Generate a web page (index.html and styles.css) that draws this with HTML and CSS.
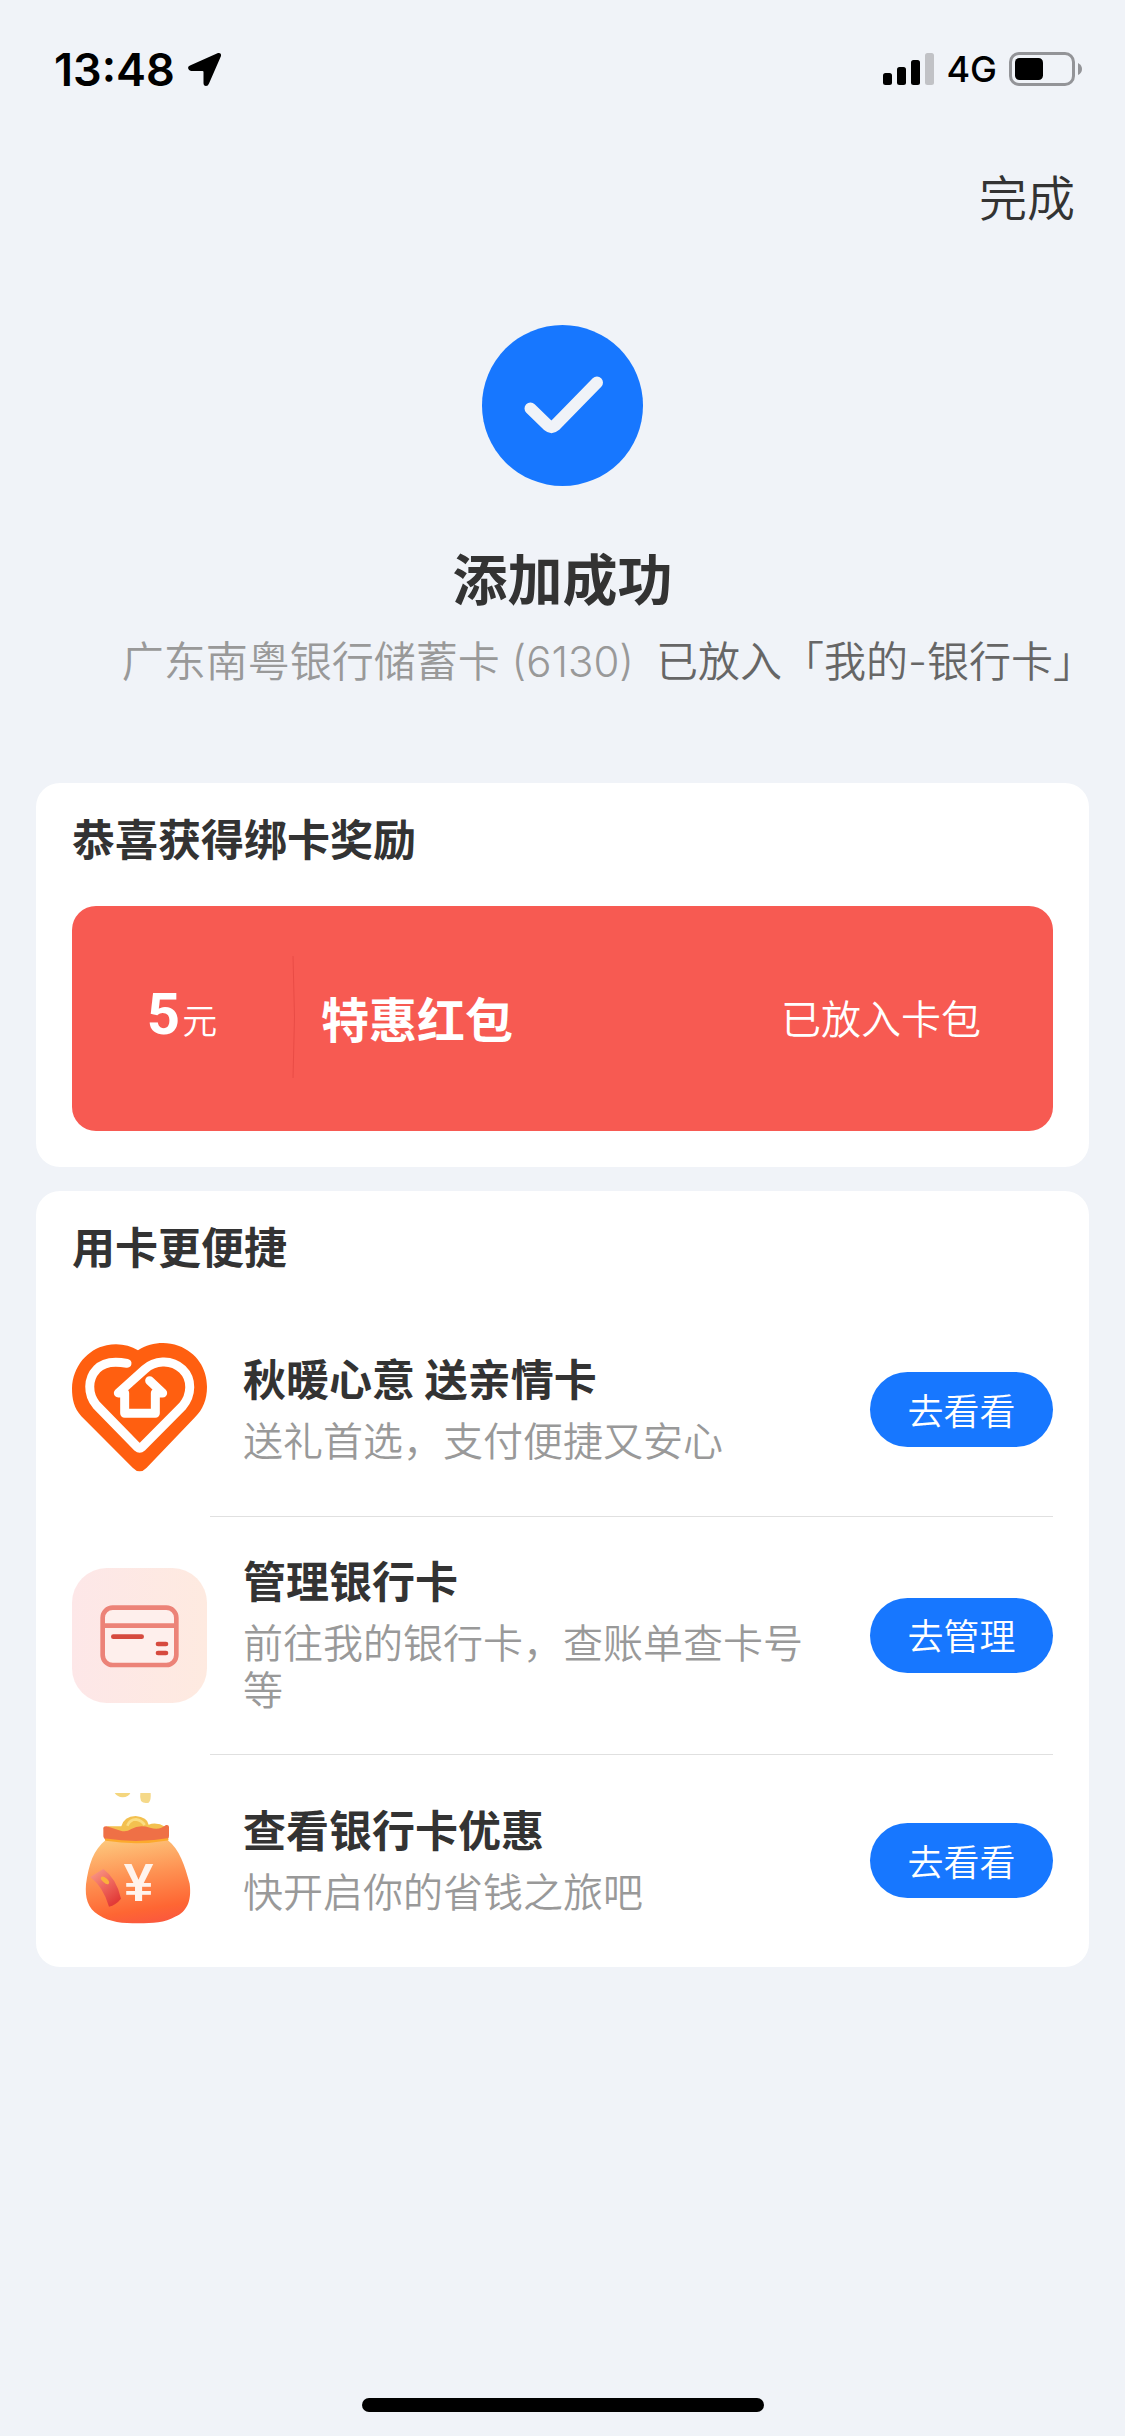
FILE: index.html
```html
<!DOCTYPE html>
<html lang="zh-CN">
<head>
<meta charset="utf-8">
<meta name="viewport" content="width=device-width, initial-scale=1">
<title>添加成功</title>
<link rel="stylesheet" href="styles.css">
</head>
<body>
<div class="page">
  <div class="status">
    <div class="status-side">
      <span class="clock">13:48</span>
      <svg class="locate" viewBox="0 0 36 36" aria-hidden="true"><path d="M3 14.500 31 2Q34.500 1.500 34 5L22 32.500Q21 35 19 35Q16.500 35 16.500 32V21Q16.500 20 15.500 20H4Q1.500 19.500 1 17Q1 15.300 3 14.500Z"/></svg>
    </div>
    <div class="status-side status-right">
      <svg class="signal" viewBox="0 0 51 32" aria-hidden="true"><rect y="20" width="9" height="12" rx="2.500"/><rect x="14" y="14" width="9" height="18" rx="2.500"/><rect x="28" y="7" width="9" height="25" rx="2.500"/><rect x="42" width="9" height="32" rx="2.500" fill="#c1c2c6"/></svg>
      <span class="network">4G</span>
      <svg class="battery" viewBox="0 0 74 34" aria-hidden="true"><rect x="1.500" y="1.500" width="63" height="31" rx="8.500" fill="none" stroke="#939498" stroke-width="3"/><rect x="6" y="6" width="28" height="22" rx="4.500"/><path d="M69 11q4 2 4 6t-4 6z" fill="#939498"/></svg>
    </div>
  </div>

  <header class="topbar"><button class="done" type="button">完成</button></header>

  <main>
    <section class="result">
      <svg class="result-icon" viewBox="0 0 161 161" aria-hidden="true"><circle cx="80.500" cy="80.500" r="80.500" fill="#1777ff"/><path d="M48.500 83.500 66 100.500Q69.500 103.500 73 100.500L115 57.500" fill="none" stroke="#f0f3f8" stroke-width="12" stroke-linecap="round" stroke-linejoin="round"/></svg>
      <h1 class="result-title">添加成功</h1>
      <p class="result-note"><span class="card-name">广东南粤银行储蓄卡 (6130)</span><span>已放入「我的-银行卡」</span></p>
    </section>

    <section class="card reward-card">
      <h2 class="card-title">恭喜获得绑卡奖励</h2>
      <div class="reward">
        <p class="amount"><b class="amount-value">5</b><span>元</span></p>
        <svg class="divider" viewBox="0 0 4 122" preserveAspectRatio="none" aria-hidden="true"><path d="M1 0Q4 61 1 122" fill="none" stroke="#e94c46" stroke-width="1"/></svg>
        <h3 class="reward-name">特惠红包</h3>
        <span class="reward-state">已放入卡包</span>
      </div>
    </section>

    <section class="card">
      <h2 class="card-title">用卡更便捷</h2>
      <ul class="list">
        <li class="item">
          <svg class="item-icon" viewBox="66 66 405 405" aria-hidden="true">
            <path d="M264 91C300 68 345 63 385 77C440 97 471 145 471 200C471 240 458 268 435 292L290 443Q269 465 248 443L94 289C72 264 66 238 66 205C68 140 112 88 170 76C204 69 238 75 264 91Z" fill="#ff5f10"/>
            <g fill="none" stroke="#fff" stroke-width="27" stroke-linecap="round" stroke-linejoin="round"><path d="M231 130C190 122 160 126 140 148C113 176 112 222 139 255L262 381Q269 387 276 381L398 258C425 225 428 178 397 148C362 115 312 123 284 148L205 219H224V280H316V219H338L299 182"/></g>
          </svg>
          <div class="item-body">
            <h3 class="item-title">秋暖心意 送亲情卡</h3>
            <p class="item-text">送礼首选，支付便捷又安心</p>
          </div>
          <button class="go" type="button">去看看</button>
        </li>
        <li class="item">
          <svg class="item-icon" viewBox="66 80 405 405" aria-hidden="true">
            <defs><linearGradient id="tile" x1="0" y1="0" x2="1" y2="0"><stop offset="0" stop-color="#fde7e8"/><stop offset="1" stop-color="#feeae0"/></linearGradient></defs>
            <rect x="66" y="80" width="405" height="405" rx="104" fill="url(#tile)"/>
            <g fill="none" stroke="#ec8378" stroke-width="14"><rect x="158" y="199" width="221" height="172" rx="30" fill="#feefec"/><path d="M158 253H379"/></g>
            <path d="M190 286H275M324 308H348M324 335H348" fill="none" stroke="#d64a3e" stroke-width="14" stroke-linecap="round"/>
          </svg>
          <div class="item-body">
            <h3 class="item-title">管理银行卡</h3>
            <p class="item-text">前往我的银行卡，查账单查卡号等</p>
          </div>
          <button class="go" type="button">去管理</button>
        </li>
        <li class="item">
          <svg class="item-icon" viewBox="66 68 405 405" aria-hidden="true">
            <defs>
              <linearGradient id="bag" x1="0.300" y1="0" x2="0.500" y2="1"><stop offset="0" stop-color="#fdc67c"/><stop offset="0.450" stop-color="#fe9152"/><stop offset="0.850" stop-color="#fe6633"/><stop offset="1" stop-color="#fb5a3c"/></linearGradient>
              <linearGradient id="packet" x1="0" y1="0" x2="0.600" y2="1"><stop offset="0" stop-color="#fba08c"/><stop offset="0.500" stop-color="#ef6a60"/><stop offset="1" stop-color="#e23b38"/></linearGradient>
            </defs>
            <path d="M194 68H241Q236 80 218 81Q202 80 194 68Z" fill="#f4d67e"/>
            <path d="M271 68H302Q304 90 296 97Q281 101 273 92Q269 80 271 68Z" fill="#f5d989"/>
            <path d="M172 168H214Q222 138 257 137Q292 140 296 163Q320 154 347 170L340 190H180Z" fill="#f3c04f"/>
            <path d="M232 166Q240 147 258 147Q276 150 284 164" fill="none" stroke="#fbdd83" stroke-width="8"/>
            <path d="M168 208H352C390 238 404 285 419 340C426 395 408 424 378 438C342 458 310 459 265 459C218 459 180 456 146 434C112 414 105 382 108 342C116 282 130 238 168 208Z" fill="url(#bag)"/>
            <path d="M160 178Q158 167 170 168L212 181Q228 187 244 176Q268 162 300 172Q328 181 348 164Q358 162 357 174V196Q357 208 346 209Q260 219 172 209Q161 207 160 198Z" fill="#ef7046"/>
            <path d="M168 208Q262 223 352 207" fill="none" stroke="#fcaa2d" stroke-width="7" stroke-linecap="round"/>
            <path d="M121 320Q140 308 160 296Q200 325 213 385Q198 404 177 409Q160 350 121 320Z" fill="url(#packet)"/>
            <ellipse cx="165" cy="330" rx="15" ry="7" transform="rotate(42 165 330)" fill="#fbb03c"/>
            <text class="yen" x="266" y="391" text-anchor="middle">¥</text>
          </svg>
          <div class="item-body">
            <h3 class="item-title">查看银行卡优惠</h3>
            <p class="item-text">快开启你的省钱之旅吧</p>
          </div>
          <button class="go" type="button">去看看</button>
        </li>
      </ul>
    </section>
  </main>

  <div class="home-indicator"></div>
</div>
</body>
</html>
```
FILE: styles.css
```css
* { box-sizing: border-box; margin: 0; padding: 0; }

body {
  background: #f0f3f8;
  color: #333;
  font-family: "Noto Sans CJK SC", sans-serif;
  font-size: 40px;
}

button { border: 0; background: none; font: inherit; color: inherit; cursor: pointer; }
svg { display: block; flex: none; }

.page { display: flex; flex-direction: column; min-height: 100vh; }

.status {
  display: flex;
  justify-content: space-between;
  align-items: center;
  height: 138px;
  padding: 0 42px 0 54px;
  color: #000;
  font-family: Inter, sans-serif;
}
.status-side { display: flex; align-items: center; gap: 12px; }
.clock { font-size: 45px; font-weight: 600; }
.locate { width: 36px; height: 36px; }
.signal { width: 51px; height: 32px; }
.network { font-size: 36px; font-weight: 500; }
.battery { width: 74px; height: 34px; }

.topbar { display: flex; justify-content: flex-end; padding: 21px 50px 28px; }
.done { font-size: 48px; font-weight: 350; line-height: 72px; }

.result { display: flex; flex-direction: column; align-items: center; padding-top: 66px; }
.result-icon { width: 161px; height: 161px; }
.result-title { margin-top: 52px; font-size: 55px; font-weight: 700; line-height: 76px; }
.result-note {
  display: flex;
  align-self: stretch;
  justify-content: flex-end;
  gap: 22px;
  margin-top: 18px;
  padding-right: 30px;
  color: #666;
  font-family: Inter, "Noto Sans CJK SC", sans-serif;
  font-size: 42px;
  font-weight: 350;
  line-height: 60px;
  white-space: nowrap;
}
.card-name { color: #999; }

.card { margin: 0 36px 24px; padding: 0 36px; border-radius: 24px; background: #fff; }
.reward-card { margin-top: 91px; padding-bottom: 36px; }
.card-title { padding: 26px 0 30px; font-size: 43px; font-weight: 700; line-height: 56px; }

.reward {
  display: flex;
  align-items: center;
  height: 225px;
  margin-top: 11px;
  padding: 0 72px 4px 0;
  border-radius: 24px;
  background: #f75a52;
  color: #fff;
}
.amount {
  display: flex;
  align-items: baseline;
  justify-content: center;
  gap: 2px;
  width: 220px;
  font-size: 35px;
  font-weight: 350;
  line-height: 72px;
}
.amount-value { font-family: Roboto, sans-serif; font-size: 58px; font-weight: 700; }
.divider { width: 4px; height: 122px; }
.reward-name { flex: 1; padding-left: 25px; font-size: 48px; font-weight: 700; line-height: 72px; }
.reward-state { font-weight: 350; line-height: 60px; }

.list { list-style: none; }
.item { display: flex; align-items: center; min-height: 213px; padding: 36px 0; position: relative; }
.item + .item::before {
  content: "";
  position: absolute;
  top: 0;
  right: 0;
  left: 138px;
  height: 1px;
  background: #e0e0e0;
}
.item-icon { width: 135px; height: 135px; }
.item-body { flex: 1; padding: 0 60px 6px 36px; }
.item-title { font-size: 43px; font-weight: 700; line-height: 54px; }
.item-text { margin-top: 12px; color: #999; font-weight: 350; line-height: 47px; }
.go {
  flex: none;
  width: 183px;
  height: 75px;
  padding-bottom: 2px;
  border-radius: 38px;
  background: #1777ff;
  color: #fff;
  font-size: 36px;
  font-weight: 350;
}
.yen { fill: #fff3ec; font-family: "Liberation Sans", sans-serif; font-size: 160px; font-weight: 700; }

.home-indicator {
  width: 402px;
  height: 14px;
  margin: auto auto 24px;
  border-radius: 7px;
  background: #000;
}
```
